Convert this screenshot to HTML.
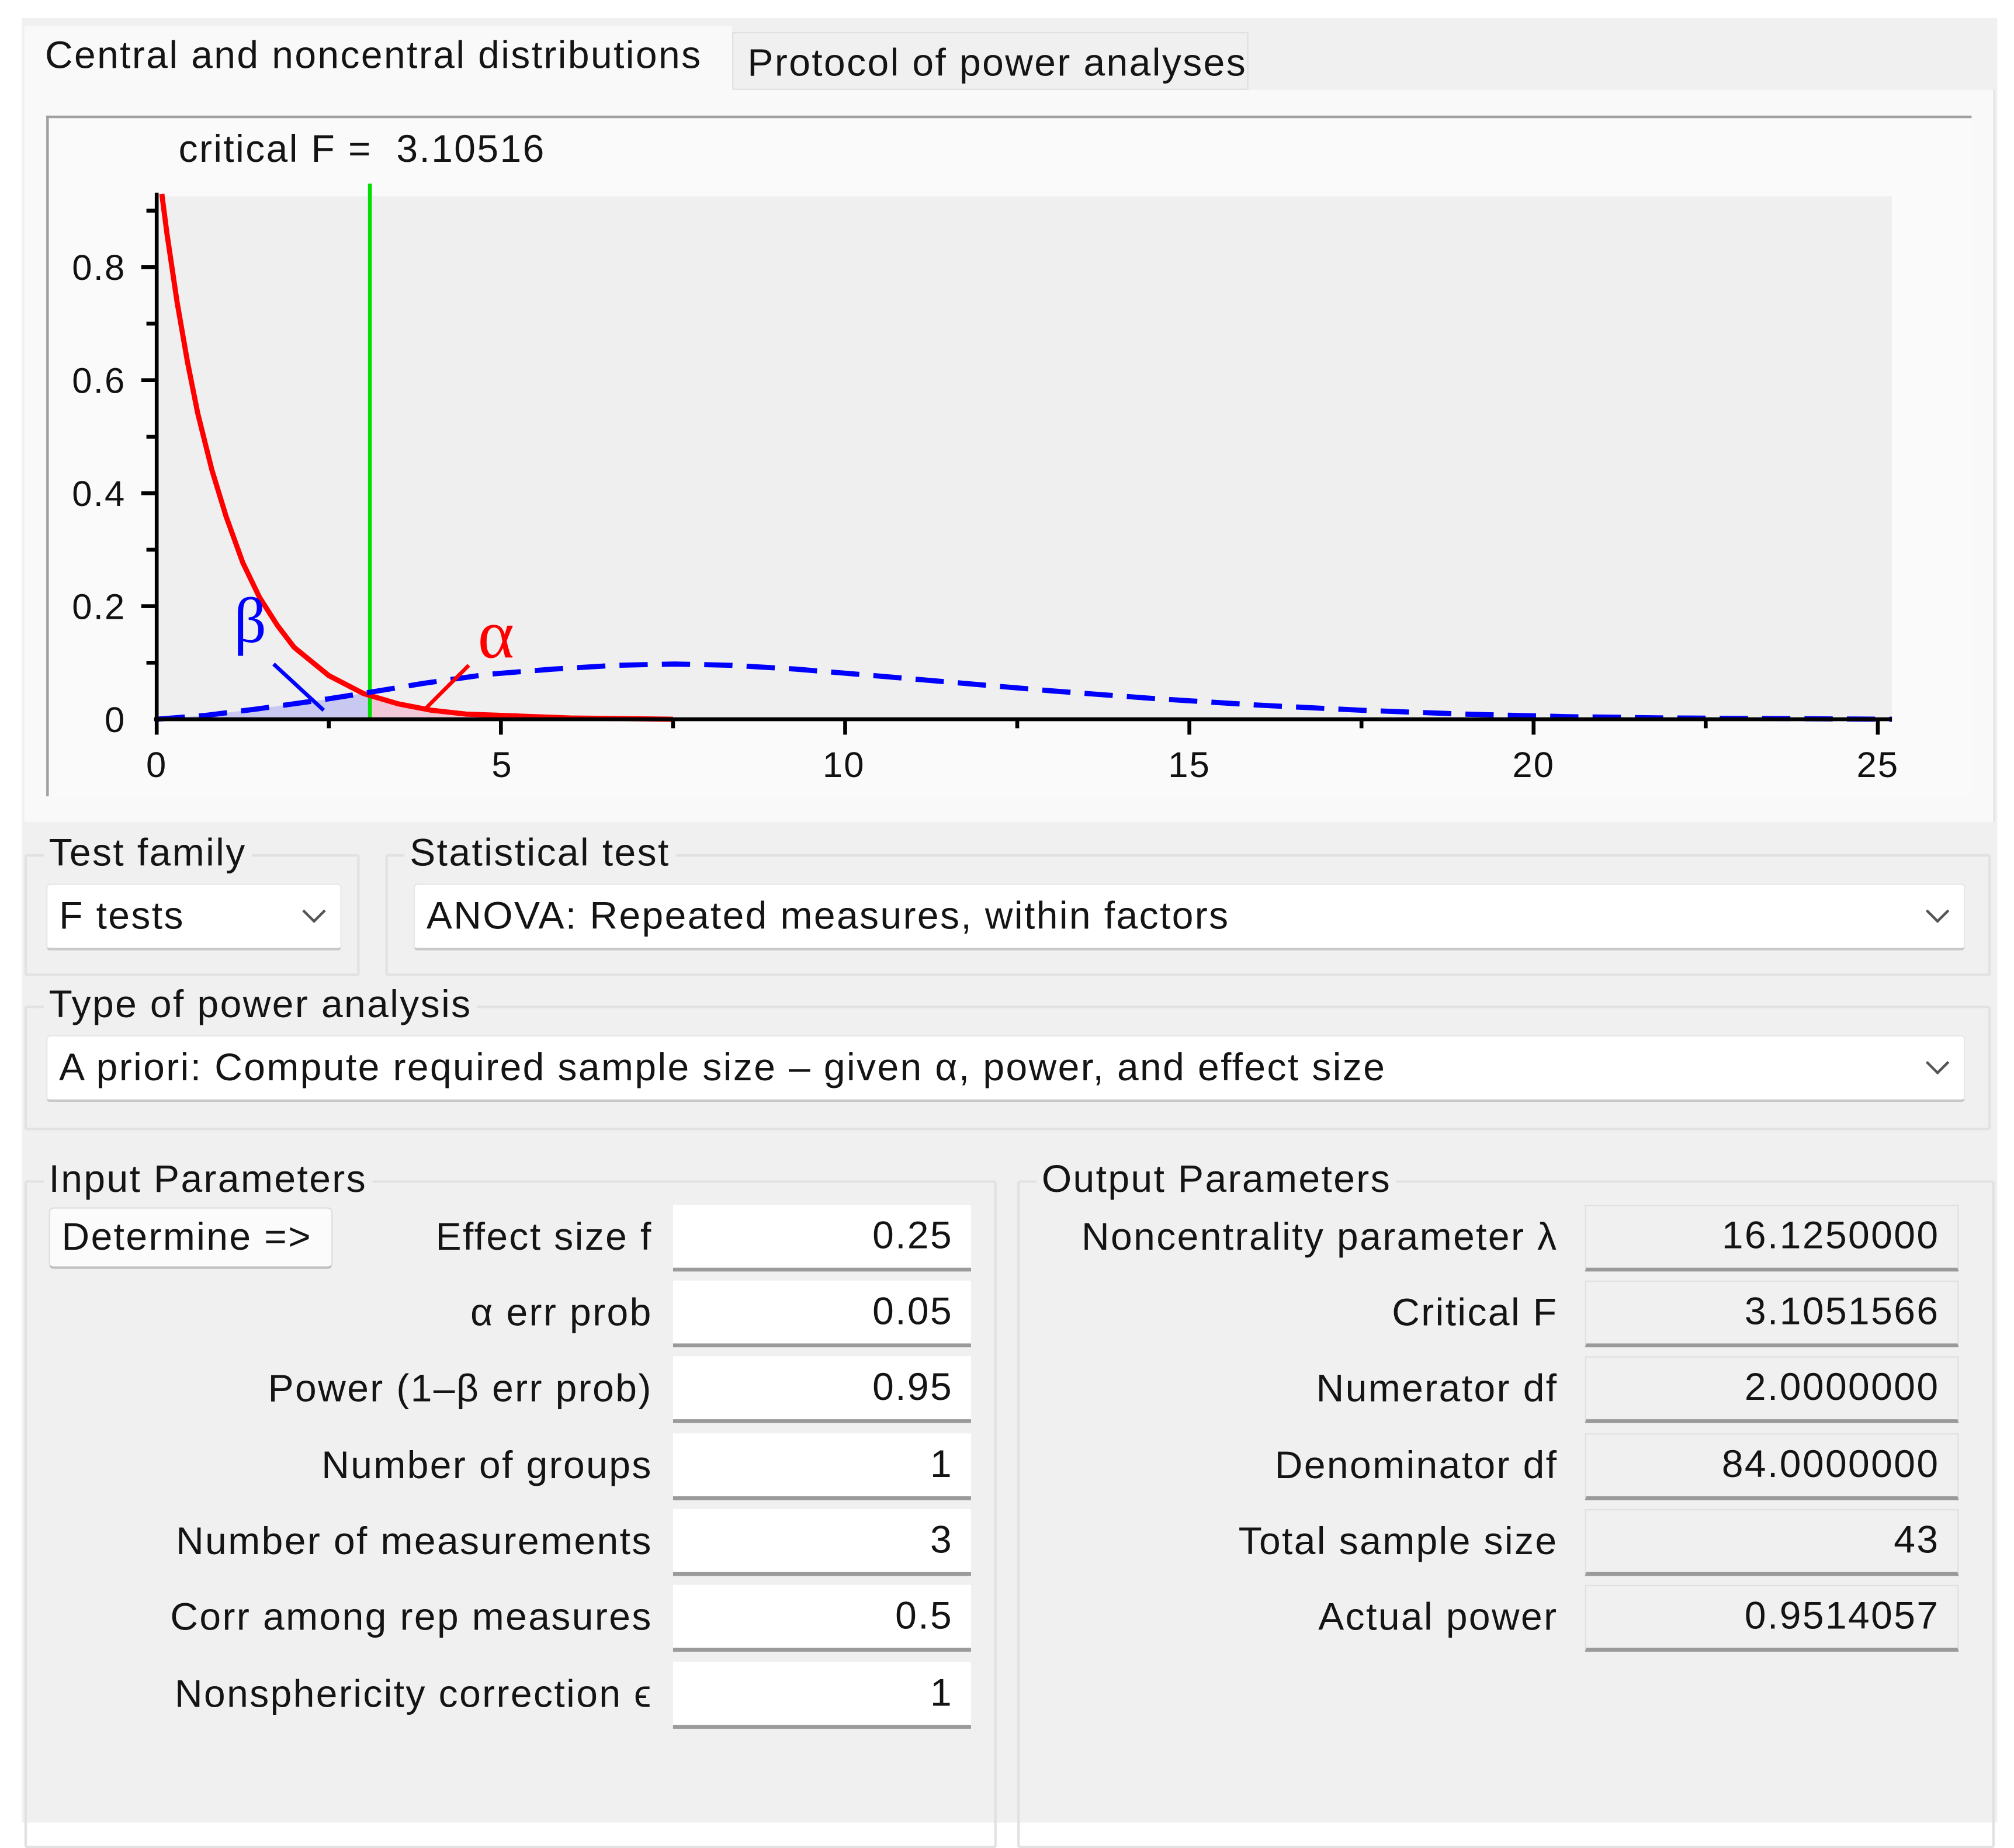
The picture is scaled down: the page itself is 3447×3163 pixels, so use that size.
<!DOCTYPE html>
<html><head><meta charset="utf-8"><style>
html,body{margin:0;padding:0;background:#fff;width:3447px;height:3119px;overflow:hidden}
#w{position:absolute;left:0;top:0;width:1568px;height:1419px;transform:scale(2.1983);transform-origin:0 0;font-family:"Liberation Sans",sans-serif;color:#141414;font-size:30px;letter-spacing:1.1px}
.a{position:absolute}
.fs{position:absolute;border:2px solid #e2e2e2;border-radius:2px}
.lg{position:absolute;background:#f0f0f0;padding:0 4px;line-height:30px;white-space:nowrap}
.cb{position:absolute;background:#fff;border:1px solid #e6e6e6;border-bottom:2px solid #c8c8c8;border-radius:3px;box-sizing:border-box;line-height:50px;padding-left:9px;white-space:nowrap}
.chev{position:absolute;right:14px;width:11px;height:11px;border-right:2px solid #555;border-bottom:2px solid #555;transform:rotate(45deg);top:14px}
.in{position:absolute;left:524px;width:232px;height:52px;background:#fff;border-bottom:3px solid #9a9a9a;box-sizing:border-box;text-align:right;padding-right:14px;line-height:50px}
.out{position:absolute;left:1234px;width:291px;height:52px;background:#f0f0f0;border:1px solid #e0e0e0;border-bottom:3px solid #9a9a9a;box-sizing:border-box;text-align:right;padding-right:14px;line-height:48px}
.li{position:absolute;right:1060px;text-align:right;white-space:nowrap;line-height:52px}
.lo{position:absolute;right:355px;text-align:right;white-space:nowrap;line-height:52px}
</style></head><body><div id="w">
<div class="a" style="left:17px;top:14px;width:1538px;height:1405px;background:#f0f0f0"></div>
<div class="a" style="left:570px;top:25px;width:402px;height:45px;background:#f0f0f0;border:1px solid #e0e0e0;box-sizing:border-box;line-height:48px;padding-left:11px">Protocol of power analyses</div>
<div class="a" style="left:19px;top:20px;width:551px;height:52px;background:#f9f9f9;line-height:48px;padding-left:16px;box-sizing:border-box">Central and noncentral distributions</div>
<div class="a" style="left:19px;top:70px;width:1534px;height:570px;background:#f9f9f9;border-right:1px solid #e0e0e0;box-sizing:border-box"></div>
<div class="a" style="left:36px;top:90px;width:1499px;height:530px;background:#fafafa;border-top:2px solid #a0a0a0;border-left:2px solid #a0a0a0;box-sizing:border-box"></div>
<div class="a" style="left:139px;top:98px;line-height:38px">critical F =&nbsp; 3.10516</div>
<svg class="a" style="left:0;top:0" width="1568" height="640" viewBox="0 0 1568 640">
<rect x="122" y="153" width="1351" height="407" fill="#efefef"/>
<path d="M122,560 L160,557 200,552 250,545 288,539 L288,560 Z" fill="#c8c8f0"/>
<path d="M288,541 L310,548 336,553 363,556 390,557 444,559 524,560 288,560Z" fill="#f0c8d8"/>
<line x1="288" y1="143" x2="288" y2="560" stroke="#00e000" stroke-width="3"/>
<polyline points="126,151 130,182 138,236 146,282 154,322 165,366 176,402 189,438 202,465 216,487 229,504 256,526 283,540 310,548 336,553 363,556 390,557 444,559 524,560" fill="none" stroke="#ff0000" stroke-width="4" stroke-linejoin="round"/>
<polyline points="122,560 160,557 200,552 250,545 288,539 330,532 380,525 430,521 480,518 525,517 570,518 620,521 680,526 750,532 820,538 900,544 980,549 1060,553 1140,556 1220,558 1300,559 1473,560" fill="none" stroke="#0000ff" stroke-width="4" stroke-dasharray="22,11" stroke-linejoin="round"/>
<line x1="213" y1="517" x2="252" y2="553" stroke="#0000ff" stroke-width="3"/>
<line x1="365" y1="518" x2="330" y2="553" stroke="#ff0000" stroke-width="3"/>
<text x="182" y="500" font-family="Liberation Serif,serif" font-size="50" fill="#0000ff">β</text>
<text x="372" y="512" font-family="Liberation Serif,serif" font-size="54" fill="#ff0000">α</text>
<g stroke="#000" stroke-width="3">
<line x1="122" y1="150" x2="122" y2="562"/><line x1="120" y1="560" x2="1473" y2="560"/>
<line x1="110" y1="208" x2="122" y2="208"/><line x1="110" y1="296" x2="122" y2="296"/><line x1="110" y1="384" x2="122" y2="384"/><line x1="110" y1="472" x2="122" y2="472"/>
<line x1="114" y1="164" x2="122" y2="164"/><line x1="114" y1="252" x2="122" y2="252"/><line x1="114" y1="340" x2="122" y2="340"/><line x1="114" y1="428" x2="122" y2="428"/><line x1="114" y1="516" x2="122" y2="516"/>
<line x1="390" y1="560" x2="390" y2="572"/><line x1="658" y1="560" x2="658" y2="572"/><line x1="926" y1="560" x2="926" y2="572"/><line x1="1194" y1="560" x2="1194" y2="572"/><line x1="1462" y1="560" x2="1462" y2="572"/><line x1="122" y1="560" x2="122" y2="572"/>
<line x1="256" y1="560" x2="256" y2="567"/><line x1="524" y1="560" x2="524" y2="567"/><line x1="792" y1="560" x2="792" y2="567"/><line x1="1060" y1="560" x2="1060" y2="567"/><line x1="1328" y1="560" x2="1328" y2="567"/>
</g>
<g font-family="Liberation Sans,sans-serif" font-size="28" fill="#111" letter-spacing="1">
<text x="98" y="218" text-anchor="end">0.8</text><text x="98" y="306" text-anchor="end">0.6</text><text x="98" y="394" text-anchor="end">0.4</text><text x="98" y="482" text-anchor="end">0.2</text><text x="98" y="570" text-anchor="end">0</text>
<g text-anchor="middle"><text x="122" y="605">0</text><text x="391" y="605">5</text><text x="657" y="605">10</text><text x="926" y="605">15</text><text x="1194" y="605">20</text><text x="1462" y="605">25</text></g>
</g></svg>

<div class="fs" style="left:19px;top:665px;width:261px;height:95px;box-sizing:border-box"></div>
<div class="lg" style="left:34px;top:650px">Test family</div>
<div class="cb" style="left:36px;top:688px;width:230px;height:52px">F tests<div class="chev"></div></div>
<div class="fs" style="left:300px;top:665px;width:1250px;height:95px;box-sizing:border-box"></div>
<div class="lg" style="left:315px;top:650px">Statistical test</div>
<div class="cb" style="left:322px;top:688px;width:1208px;height:52px">ANOVA: Repeated measures, within factors<div class="chev"></div></div>
<div class="fs" style="left:19px;top:783px;width:1531px;height:97px;box-sizing:border-box"></div>
<div class="lg" style="left:34px;top:768px">Type of power analysis</div>
<div class="cb" style="left:36px;top:806px;width:1494px;height:52px">A priori: Compute required sample size – given α, power, and effect size<div class="chev"></div></div>

<div class="fs" style="left:19px;top:919px;width:757px;height:520px;box-sizing:border-box"></div>
<div class="lg" style="left:34px;top:904px">Input Parameters</div>
<div class="fs" style="left:792px;top:919px;width:761px;height:520px;box-sizing:border-box"></div>
<div class="lg" style="left:807px;top:904px">Output Parameters</div>
<div class="a" style="left:38px;top:940px;width:221px;height:48px;background:#fbfbfb;border:1px solid #dcdcdc;border-bottom:2px solid #c0c0c0;border-radius:4px;box-sizing:border-box;line-height:46px;padding-left:9px;white-space:nowrap">Determine =&gt;</div>

<div class="li" style="top:938px">Effect size f</div><div class="in" style="top:938px">0.25</div>
<div class="li" style="top:997px">α err prob</div><div class="in" style="top:997px">0.05</div>
<div class="li" style="top:1056px">Power (1–β err prob)</div><div class="in" style="top:1056px">0.95</div>
<div class="li" style="top:1116px">Number of groups</div><div class="in" style="top:1116px">1</div>
<div class="li" style="top:1175px">Number of measurements</div><div class="in" style="top:1175px">3</div>
<div class="li" style="top:1234px">Corr among rep measures</div><div class="in" style="top:1234px">0.5</div>
<div class="li" style="top:1294px">Nonsphericity correction ϵ</div><div class="in" style="top:1294px">1</div>

<div class="lo" style="top:938px">Noncentrality parameter λ</div><div class="out" style="top:938px">16.1250000</div>
<div class="lo" style="top:997px">Critical F</div><div class="out" style="top:997px">3.1051566</div>
<div class="lo" style="top:1056px">Numerator df</div><div class="out" style="top:1056px">2.0000000</div>
<div class="lo" style="top:1116px">Denominator df</div><div class="out" style="top:1116px">84.0000000</div>
<div class="lo" style="top:1175px">Total sample size</div><div class="out" style="top:1175px">43</div>
<div class="lo" style="top:1234px">Actual power</div><div class="out" style="top:1234px">0.9514057</div>
</div></body></html>
